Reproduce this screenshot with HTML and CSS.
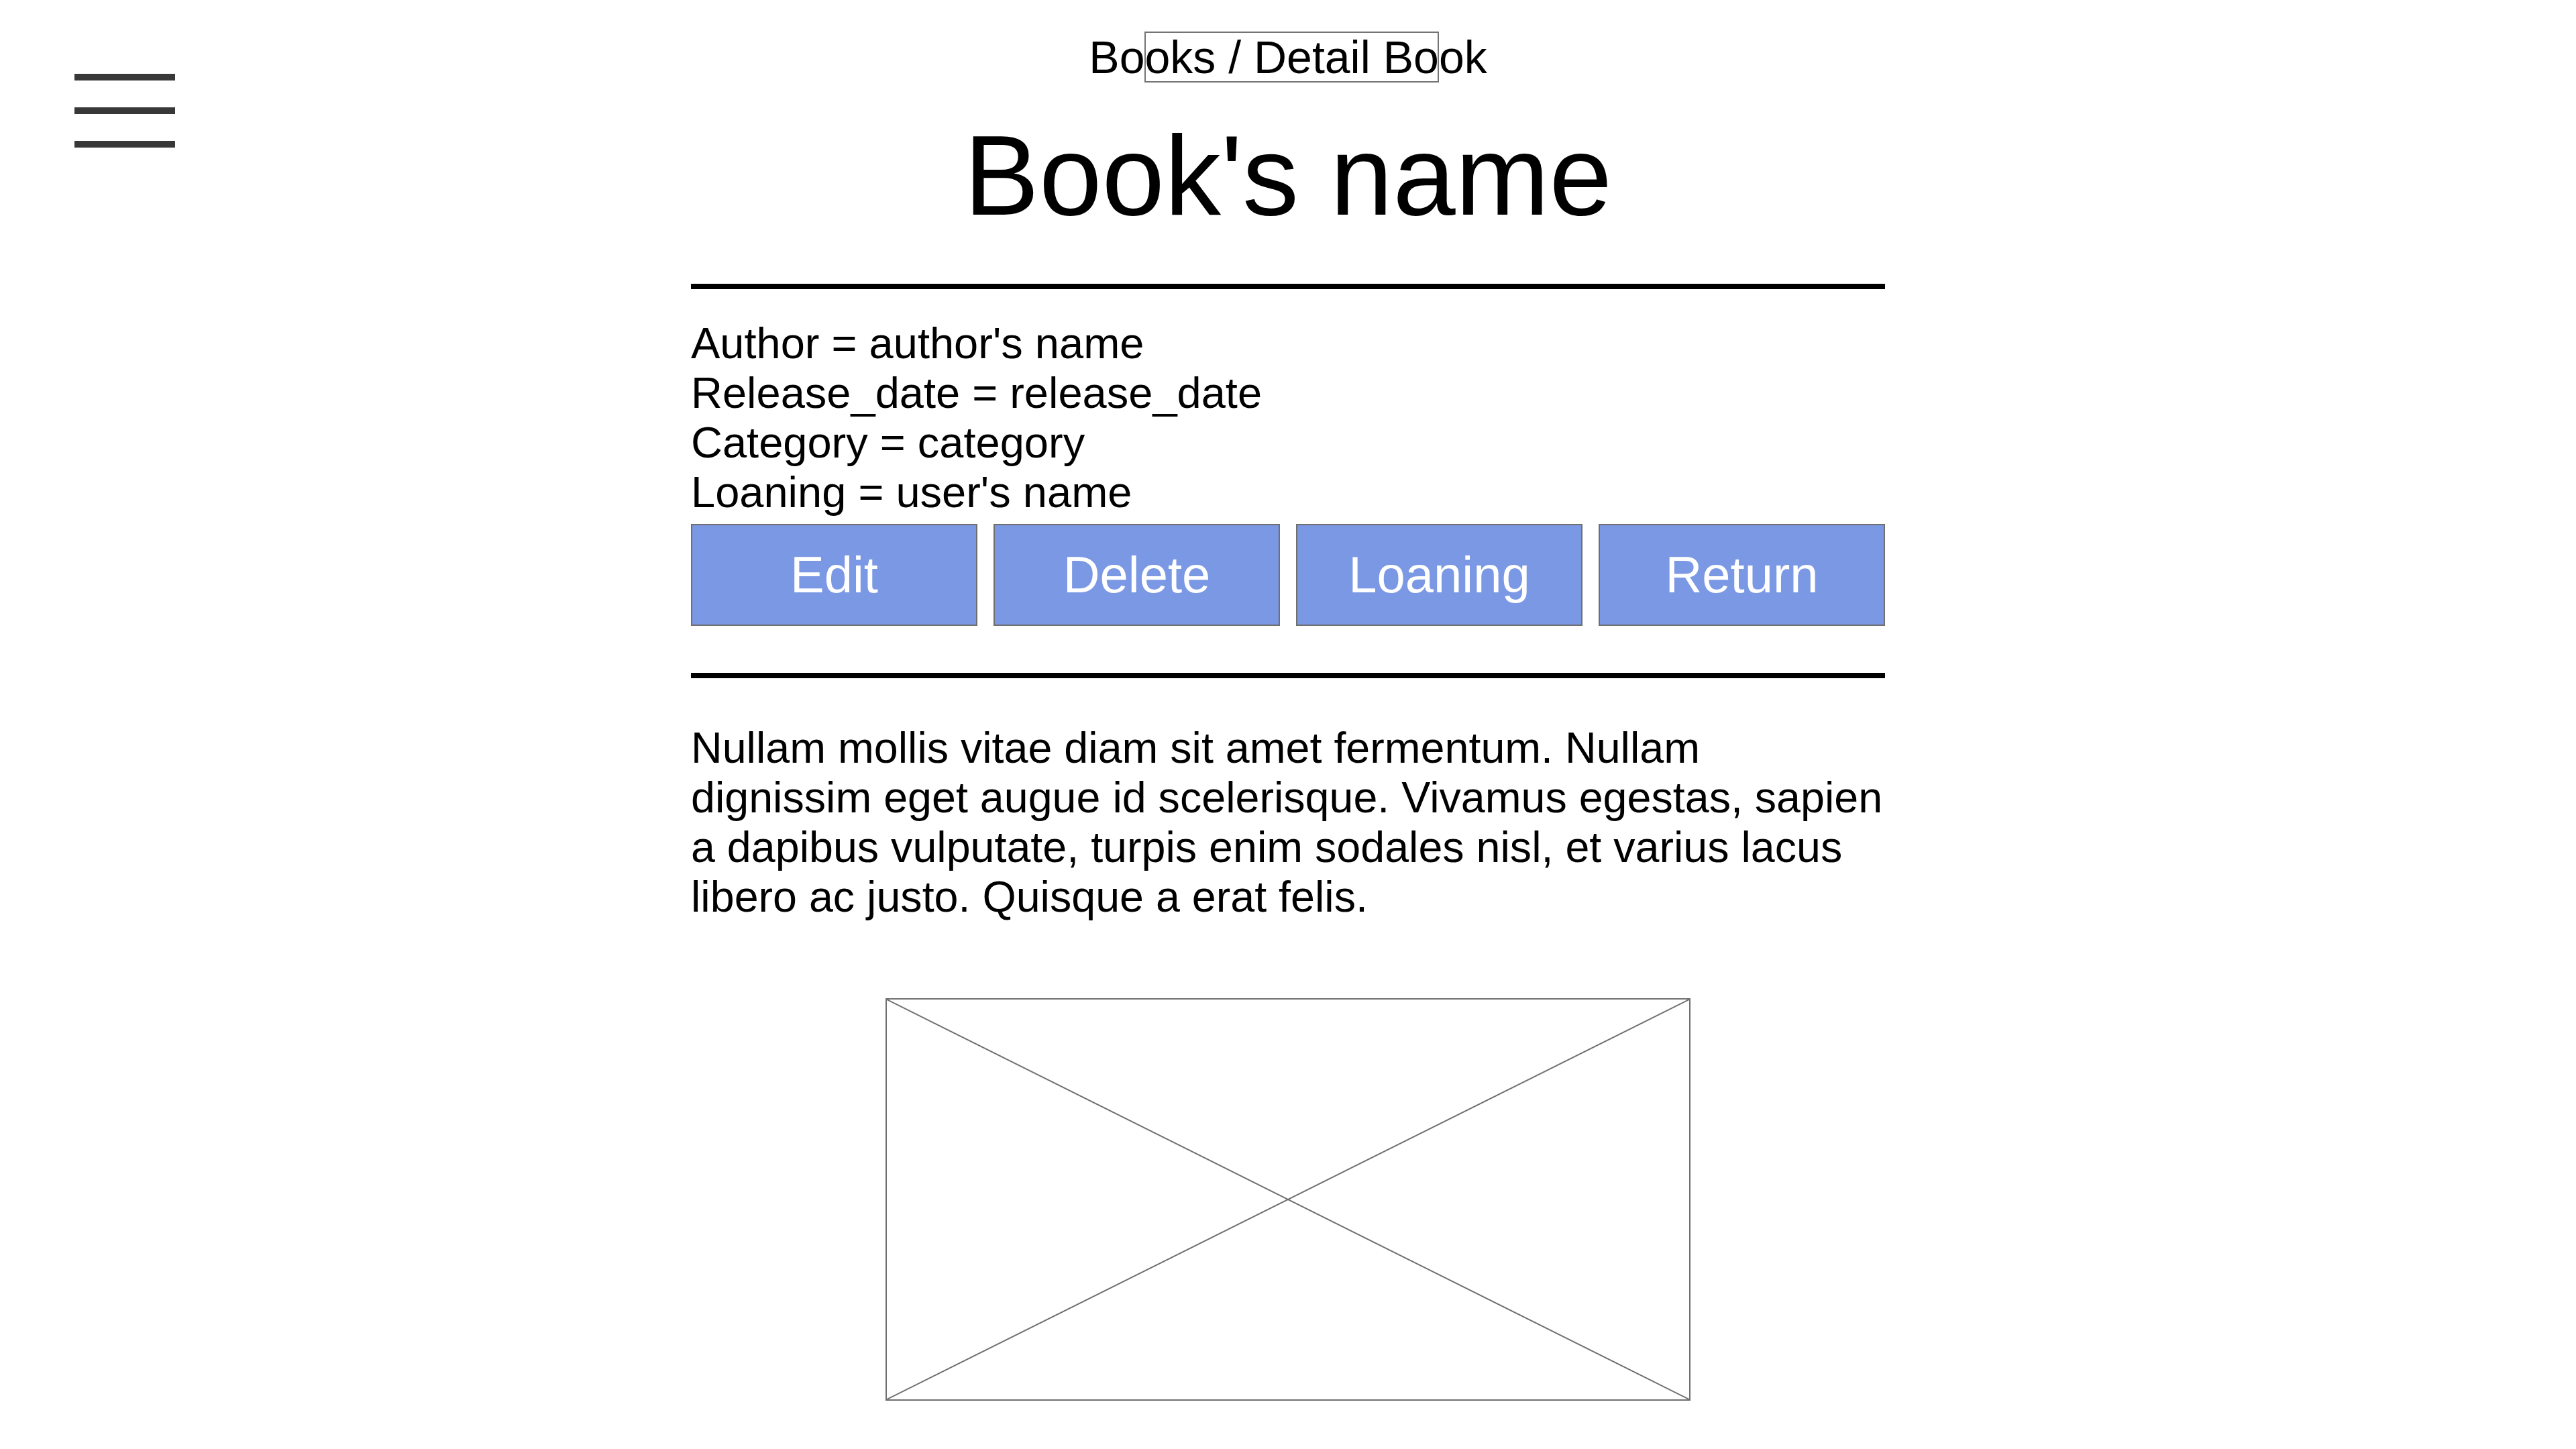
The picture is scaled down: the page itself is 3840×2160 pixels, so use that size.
FILE: index.html
```html
<!DOCTYPE html>
<html lang="en">
<head>
<meta charset="utf-8">
<title>Detail Book</title>
<link rel="stylesheet" href="styles.css">
</head>
<body>
<div class="page">
  <aside class="side">
    <div class="menu" aria-label="Menu">
      <span class="bar"></span>
      <span class="bar"></span>
      <span class="bar"></span>
    </div>
  </aside>
  <main class="main">
    <div class="crumb">Bo<span class="sel">oks / Detail Bo</span>ok</div>
    <h1 class="title">Book's name</h1>
    <hr class="rule rule-top">
    <div class="info">
      <div>Author = author's name</div>
      <div>Release_date = release_date</div>
      <div>Category = category</div>
      <div>Loaning = user's name</div>
    </div>
    <div class="actions">
      <button class="btn">Edit</button>
      <button class="btn">Delete</button>
      <button class="btn">Loaning</button>
      <button class="btn">Return</button>
    </div>
    <hr class="rule rule-bottom">
    <p class="desc">Nullam mollis vitae diam sit amet fermentum. Nullam<br>dignissim eget augue id scelerisque. Vivamus egestas, sapien<br>a dapibus vulputate, turpis enim sodales nisl, et varius lacus<br>libero ac justo. Quisque a erat felis.</p>
    <div class="placeholder">
      <svg class="ph-svg" viewBox="0 0 1196 596" preserveAspectRatio="none" aria-hidden="true">
        <line x1="0" y1="0" x2="1196" y2="596"></line>
        <line x1="1196" y1="0" x2="0" y2="596"></line>
      </svg>
    </div>
  </main>
  <div class="spacer"></div>
</div>
</body>
</html>
```

FILE: styles.css
```css
html, body {
  margin: 0;
  padding: 0;
  background: #ffffff;
}

body {
  font-family: "Liberation Sans", Arial, sans-serif;
  color: #000000;
}

.page {
  display: grid;
  grid-template-columns: 1fr 1780px 1fr;
  min-height: 2160px;
}

.side {
  padding: 110px 0 0 111px;
}

.menu {
  display: flex;
  flex-direction: column;
  gap: 40px;
  width: 150px;
}

.bar {
  display: block;
  height: 10px;
  background: #383838;
}

.main {
  display: flex;
  flex-direction: column;
  padding-top: 47px;
}

.crumb {
  font-size: 68px;
  line-height: 76px;
  text-align: center;
  white-space: nowrap;
}

.sel {
  box-shadow: inset 0 0 0 2px #747474;
}

.title {
  margin: 46px 0 0;
  font-size: 168px;
  line-height: 186px;
  font-weight: normal;
  text-align: center;
  white-space: nowrap;
}

.rule {
  border: 0;
  margin: 0;
  height: 8px;
  background: #000000;
}

.rule-top {
  margin-top: 68px;
}

.info {
  margin-top: 44px;
  font-size: 65px;
  line-height: 74px;
  white-space: nowrap;
}

.actions {
  margin-top: 10px;
  display: grid;
  grid-template-columns: repeat(4, 1fr);
  gap: 24px;
}

.btn {
  height: 152px;
  margin: 0;
  padding: 0;
  background: #7b98e4;
  border: 2px solid #6f6f6f;
  color: #ffffff;
  font-family: "Liberation Sans", Arial, sans-serif;
  font-size: 76px;
  line-height: 1;
  text-align: center;
}

.rule-bottom {
  margin-top: 70px;
}

.desc {
  margin: 67px 0 0;
  font-size: 64.6px;
  line-height: 74px;
  white-space: nowrap;
}

.placeholder {
  align-self: center;
  margin-top: 114px;
  width: 1196px;
  height: 596px;
  border: 2px solid #707070;
}

.ph-svg {
  display: block;
  width: 100%;
  height: 100%;
}

.ph-svg line {
  stroke: #707070;
  stroke-width: 2;
  vector-effect: non-scaling-stroke;
}
```
